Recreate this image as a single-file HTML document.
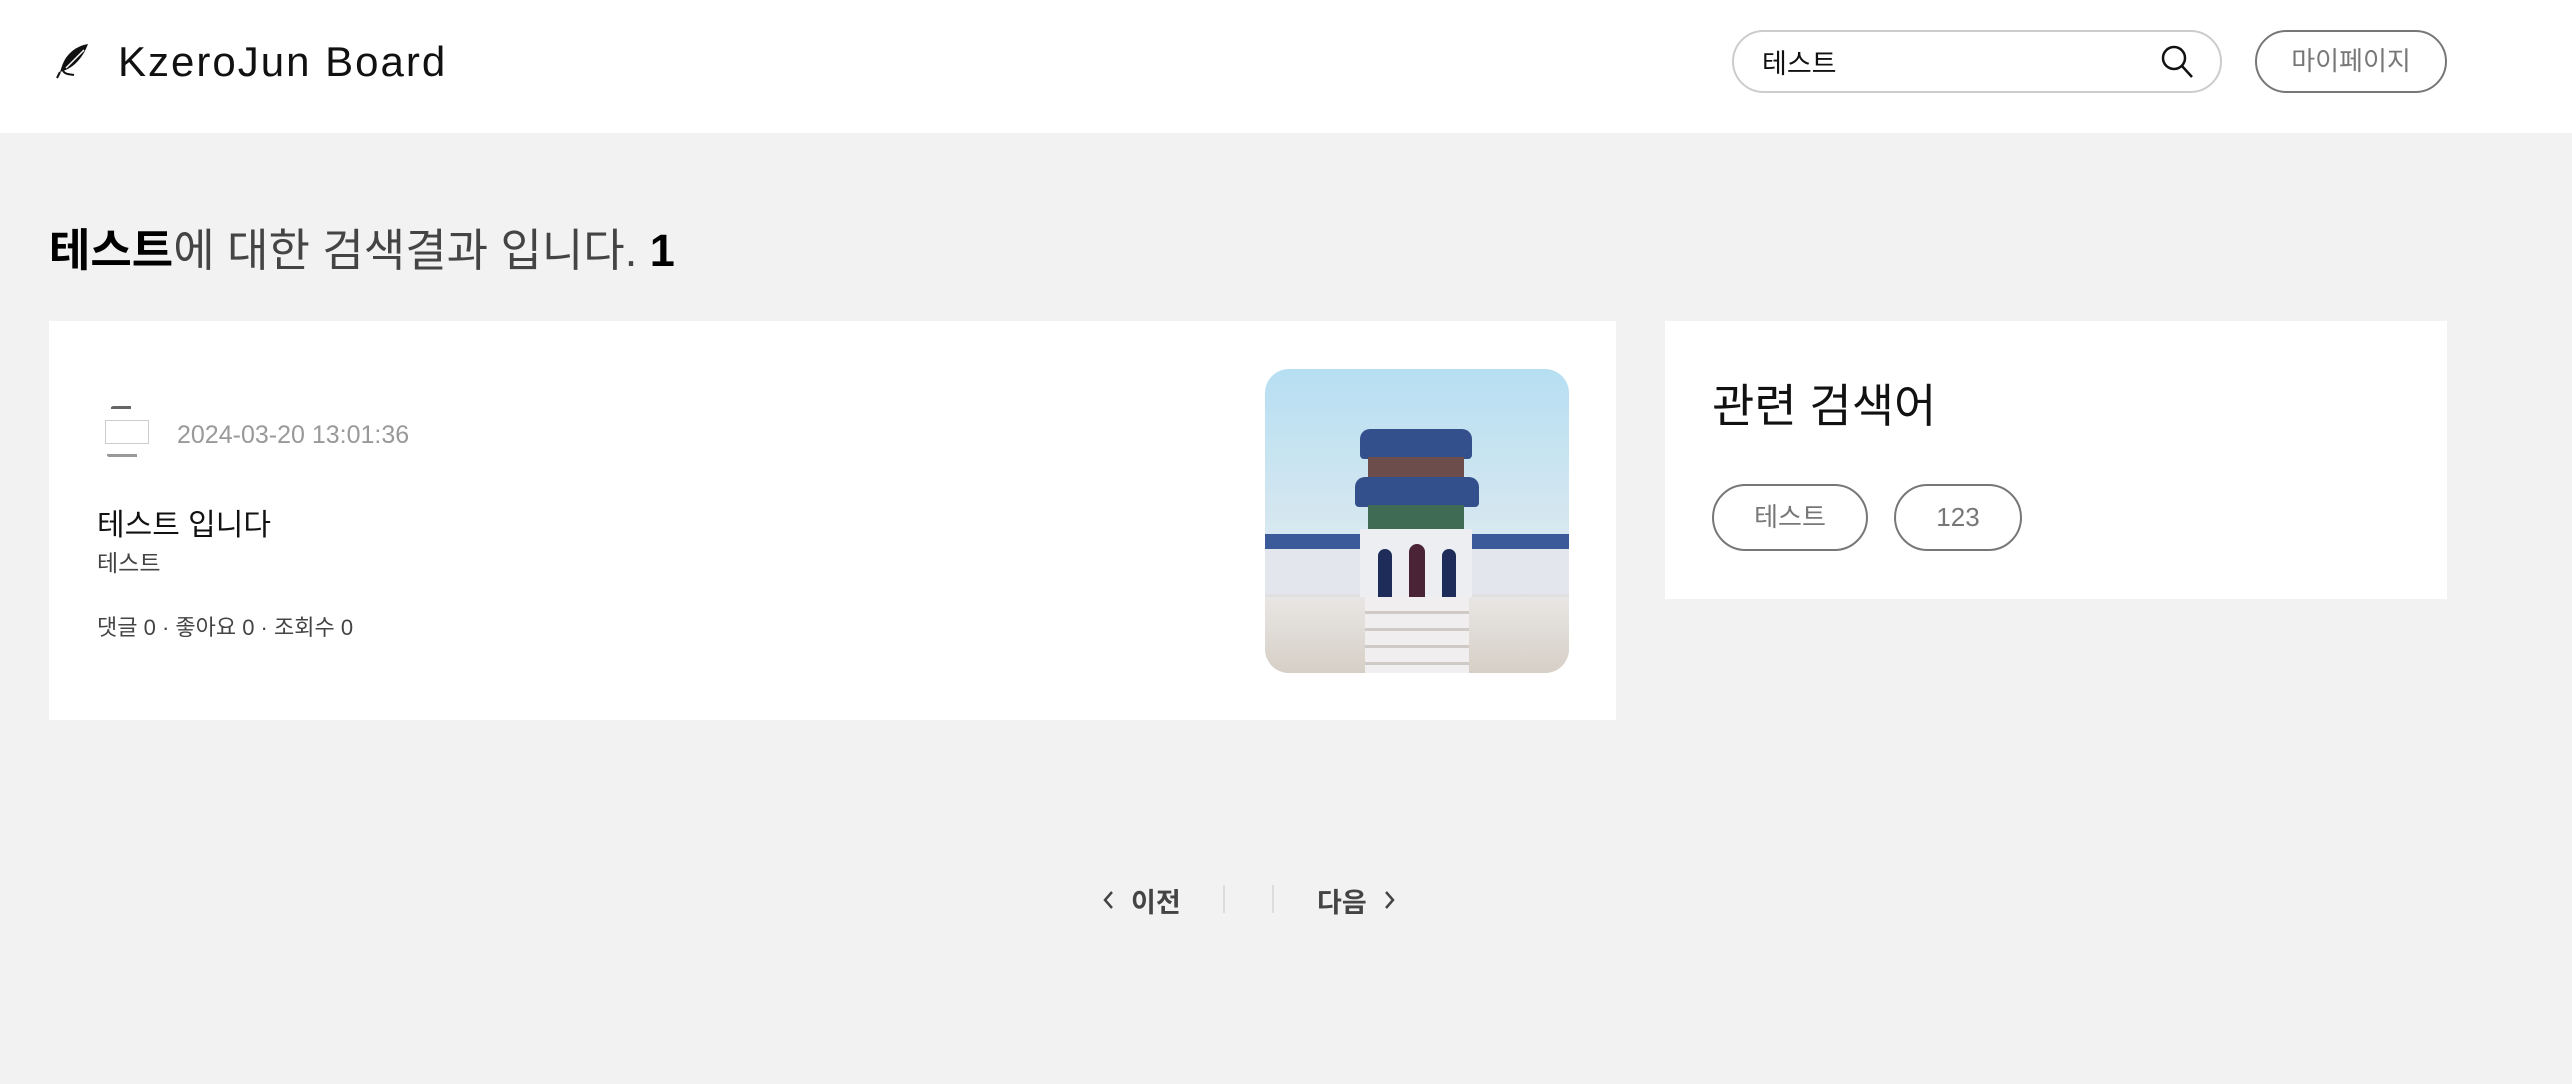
<!DOCTYPE html>
<html><head><meta charset="utf-8"><style>
*{margin:0;padding:0;box-sizing:border-box}
body{width:2572px;height:1084px;background:#f2f2f2;font-family:"Liberation Sans","Noto Sans CJK KR",sans-serif;position:relative;overflow:hidden;color:#111}
.hdr{position:absolute;left:0;top:0;width:2572px;height:133px;background:#fff}
.abs{position:absolute;white-space:nowrap}
.card{position:absolute;background:#fff}
</style></head><body>
<div class="hdr"></div>
<svg class="abs" style="left:54px;top:42px" width="38" height="38" viewBox="0 0 38 38">
<path d="M34 2 C22 4 12 12 8 24 L6 30 L9 29 C18 26 28 18 34 2 Z" fill="#111"/>
<path d="M6 30 L3 36 M9 29 C12 33 16 32 20 33" stroke="#111" stroke-width="2" fill="none"/>
<path d="M30 8 L12 26" stroke="#fff" stroke-width="1.5"/>
</svg>
<div class="abs" style="left:118px;top:38px;font-size:42px;letter-spacing:2px;color:#111">KzeroJun Board</div>
<div class="abs" style="left:1732px;top:30px;width:490px;height:63px;border:2px solid #ccc;border-radius:32px"></div>
<div class="abs" style="left:1762px;top:42px;font-size:27px;color:#111">테스트</div>
<svg class="abs" style="left:2160px;top:44px" width="36" height="36" viewBox="0 0 36 36"><circle cx="14" cy="14" r="11" stroke="#111" stroke-width="2.5" fill="none"/><path d="M22 22 L32 33" stroke="#111" stroke-width="2.5"/></svg>
<div class="abs" style="left:2255px;top:30px;width:192px;height:63px;border:2px solid #777;border-radius:32px;text-align:center;line-height:59px;font-size:26px;color:#777">마이페이지</div>

<div class="abs" style="left:49px;top:214px;font-size:45px;color:#444"><b style="color:#000">테스트</b>에 대한 검색결과 입니다. <b style="color:#000">1</b></div>

<div class="card" style="left:49px;top:321px;width:1567px;height:399px"></div>
<div class="abs" style="left:97px;top:402px;width:62px;height:62px;border-radius:50%;background:#fff;overflow:hidden">
<div style="position:absolute;left:8px;top:18px;width:44px;height:24px;border:1px solid #ccc"></div>
<div style="position:absolute;left:14px;top:4px;width:20px;height:3px;background:#666"></div>
<div style="position:absolute;left:10px;top:52px;width:30px;height:3px;background:#999"></div>
</div>
<div class="abs" style="left:177px;top:421px;font-size:25px;color:#999">2024-03-20 13:01:36</div>
<div class="abs" style="left:97px;top:500px;font-size:30px;color:#111">테스트 입니다</div>
<div class="abs" style="left:97px;top:544px;font-size:23px;color:#444">테스트</div>
<div class="abs" style="left:97px;top:610px;font-size:22px;color:#444">댓글 0 · 좋아요 0 · 조회수 0</div>

<div class="abs" style="left:1265px;top:369px;width:304px;height:304px;border-radius:24px;overflow:hidden;background:linear-gradient(#b6dff2,#d8e8f0 55%,#e6e6ea 62%,#d6d2cc)">
<div style="position:absolute;left:0;top:165px;width:304px;height:20px;background:#3a5a9a"></div>
<div style="position:absolute;left:0;top:180px;width:304px;height:45px;background:#e4e6ee"></div>
<div style="position:absolute;left:95px;top:60px;width:112px;height:30px;background:#34508c;border-radius:10px 10px 4px 4px"></div>
<div style="position:absolute;left:103px;top:88px;width:96px;height:22px;background:#6d4c4c"></div>
<div style="position:absolute;left:90px;top:108px;width:124px;height:30px;background:#34508c;border-radius:10px 10px 4px 4px"></div>
<div style="position:absolute;left:103px;top:136px;width:96px;height:26px;background:#3f6b55"></div>
<div style="position:absolute;left:95px;top:160px;width:112px;height:70px;background:#eceef2"></div>
<div style="position:absolute;left:113px;top:180px;width:14px;height:48px;background:#1e2c5a;border-radius:7px 7px 0 0"></div>
<div style="position:absolute;left:144px;top:175px;width:16px;height:53px;background:#4a2436;border-radius:8px 8px 0 0"></div>
<div style="position:absolute;left:177px;top:180px;width:14px;height:48px;background:#1e2c5a;border-radius:7px 7px 0 0"></div>
<div style="position:absolute;left:0;top:228px;width:304px;height:76px;background:linear-gradient(#e8e6e4,#d6cfc6)"></div>
<div style="position:absolute;left:100px;top:228px;width:104px;height:76px;background:repeating-linear-gradient(#f0eeee 0 14px,#cfcac6 14px 17px)"></div>
</div>

<div class="card" style="left:1665px;top:321px;width:782px;height:278px"></div>
<div class="abs" style="left:1712px;top:370px;font-size:46px;color:#111">관련 검색어</div>
<div class="abs" style="left:1712px;top:484px;width:156px;height:67px;border:2px solid #777;border-radius:34px;text-align:center;line-height:63px;font-size:26px;color:#777">테스트</div>
<div class="abs" style="left:1894px;top:484px;width:128px;height:67px;border:2px solid #777;border-radius:34px;text-align:center;line-height:63px;font-size:26px;color:#777">123</div>

<svg class="abs" style="left:1100px;top:888px" width="16" height="24" viewBox="0 0 16 24"><path d="M12 4 L5 12 L12 20" stroke="#444" stroke-width="2.5" fill="none"/></svg>
<div class="abs" style="left:1131px;top:881px;font-size:27px;font-weight:bold;color:#444">이전</div>
<div class="abs" style="left:1223px;top:885px;width:2px;height:28px;background:#ddd"></div>
<div class="abs" style="left:1272px;top:885px;width:2px;height:28px;background:#ddd"></div>
<div class="abs" style="left:1317px;top:881px;font-size:27px;font-weight:bold;color:#444">다음</div>
<svg class="abs" style="left:1382px;top:888px" width="16" height="24" viewBox="0 0 16 24"><path d="M4 4 L11 12 L4 20" stroke="#444" stroke-width="2.5" fill="none"/></svg>
</body></html>
